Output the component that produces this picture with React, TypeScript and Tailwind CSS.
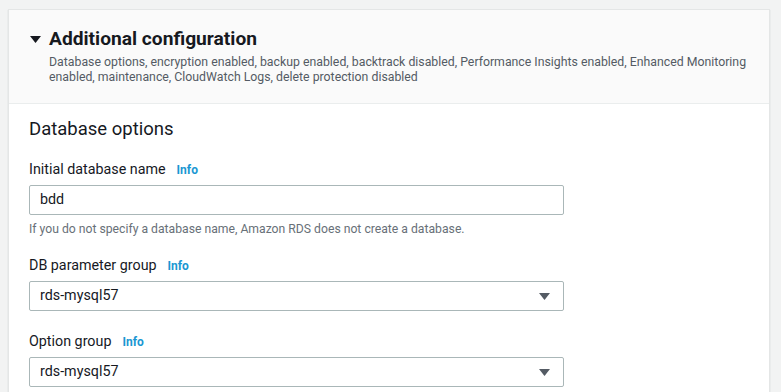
const font = { fontFamily: 'Roboto, "Liberation Sans", sans-serif' };

function Info() {
    return <span className="ml-[11px] text-[12px] font-bold text-[#1a97d2]">Info</span>;
}

function Caret({ className }: { className?: string }) {
    return (
        <svg width="11" height="7" viewBox="0 0 11 7" className={className}>
            <path d="M0 0 H11 L5.5 7 Z" fill="currentColor" />
        </svg>
    );
}

function SelectBox({ value }: { value: string }) {
    return (
        <div className="flex h-[30px] w-[535px] items-center justify-between rounded-[2px] border border-[#aab7b8] bg-white pl-[10px] pr-[13px] text-[14.3px] text-[#16191f]">
            <span>{value}</span>
            <Caret className="text-[#545b64]" />
        </div>
    );
}

export default function App() {
    return (
        <div className="min-h-[392px] bg-[#f2f3f3] pt-[9px] pl-[8px]" style={font}>
            <div className="w-[762px] border border-[#e4e6e6] bg-white shadow-[0_1px_1px_rgba(0,28,36,0.2)]">
                <div className="border-b border-[#eaeded] bg-[#fafafa] pl-[21px] pr-[20px] pt-[18px] pb-[18px]">
                    <div className="flex items-center gap-[8px]">
                        <Caret className="text-[#16191f]" />
                        <h2 className="text-[19.2px] leading-[22px] font-bold text-[#16191f]">Additional configuration</h2>
                    </div>
                    <p className="mt-[5px] pl-[19px] text-[12.3px] leading-[15px] text-[#545b64]">
                        Database options, encryption enabled, backup enabled, backtrack disabled, Performance Insights enabled, Enhanced Monitoring enabled, maintenance, CloudWatch Logs, delete protection disabled
                    </p>
                </div>
                <div className="px-[20px] pt-[14px] pb-[10px]">
                    <h3 className="text-[18.5px] leading-[22px] text-[#16191f]">Database options</h3>

                    <div className="mt-[19px]">
                        <div className="text-[14.3px] leading-[20px] text-[#16191f]">
                            Initial database name<Info />
                        </div>
                        <div className="mt-[5px] flex h-[30px] w-[535px] items-center rounded-[2px] border border-[#aab7b8] bg-white pl-[10px] text-[14.3px] text-[#16191f]">
                            bdd
                        </div>
                        <p className="mt-[6px] text-[12.2px] leading-[16px] text-[#687078]">
                            If you do not specify a database name, Amazon RDS does not create a database.
                        </p>
                    </div>

                    <div className="mt-[18px]">
                        <div className="text-[14.3px] leading-[20px] text-[#16191f]">
                            DB parameter group<Info />
                        </div>
                        <div className="mt-[5px]">
                            <SelectBox value="rds-mysql57" />
                        </div>
                    </div>

                    <div className="mt-[20px]">
                        <div className="text-[14.3px] leading-[20px] text-[#16191f]">
                            Option group<Info />
                        </div>
                        <div className="mt-[5px]">
                            <SelectBox value="rds-mysql57" />
                        </div>
                    </div>
                </div>
            </div>
        </div>
    );
}
